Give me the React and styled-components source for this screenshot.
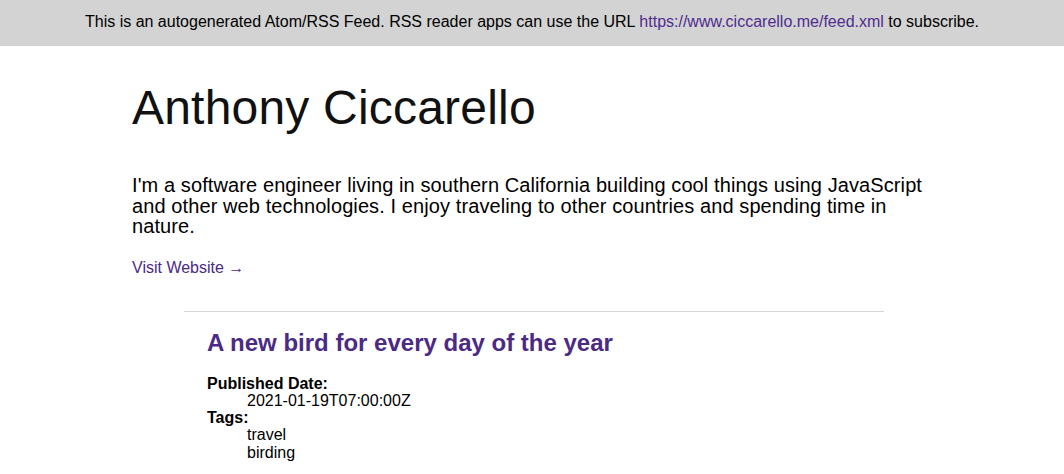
import React from "react";
import styled, { createGlobalStyle } from "styled-components";

const Global = createGlobalStyle`
  html, body { margin: 0; padding: 0; background: #fff; }
  body {
    font-family: "Liberation Sans", Arial, Helvetica, sans-serif;
    color: #000;
  }
`;

const Banner = styled.div`
  background: #d3d3d3;
  height: 46px;
  display: flex;
  align-items: center;
  justify-content: center;
  font-size: 16px;
  line-height: 18px;
  padding-bottom: 2px;
  box-sizing: border-box;
`;

const Link = styled.a`
  color: #4f2c8f;
  text-decoration: none;
`;

const Container = styled.main`
  width: 800px;
  margin: 0 auto;
  padding-top: 34px;
`;

const Title = styled.h1`
  margin: 0;
  font-size: 48px;
  font-weight: 300;
  line-height: 55px;
  letter-spacing: 0.2px;
  color: #111;
`;

const Intro = styled.p`
  margin: 40px 0 0;
  font-size: 20px;
  line-height: 20.7px;
  letter-spacing: 0.1px;
`;

const Visit = styled(Link)`
  display: inline-block;
  margin-top: 22px;
  font-size: 16px;
  line-height: 18.4px;
  color: #4b2a86;
`;

const Entry = styled.article`
  margin: 33px 0 0 52px;
  width: 700px;
  border-top: 1px solid #d6d6d6;
  padding: 17px 23px 0;
  box-sizing: border-box;
`;

const EntryTitle = styled.h2`
  margin: 0;
  font-size: 24px;
  font-weight: 700;
  line-height: 28px;
  color: #4b2a86;
`;

const Meta = styled.dl`
  margin: 18px 0 0;
  font-size: 16px;
  line-height: 17.3px;
`;

const Term = styled.dt`
  font-weight: 700;
`;

const Value = styled.dd`
  margin: 0 0 0 40px;
`;

export default function App() {
  return (
    <>
      <Global />
      <Banner>
        <span>
          This is an autogenerated Atom/RSS Feed. RSS reader apps can use the URL{" "}
          <Link href="#">https://www.ciccarello.me/feed.xml</Link> to subscribe.
        </span>
      </Banner>
      <Container>
        <Title>Anthony Ciccarello</Title>
        <Intro>
          I'm a software engineer living in southern California building cool things using
          JavaScript and other web technologies. I enjoy traveling to other countries and
          spending time in nature.
        </Intro>
        <Visit href="#">Visit Website →</Visit>
        <Entry>
          <EntryTitle>A new bird for every day of the year</EntryTitle>
          <Meta>
            <Term>Published Date:</Term>
            <Value>2021-01-19T07:00:00Z</Value>
            <Term>Tags:</Term>
            <Value>travel</Value>
            <Value>birding</Value>
          </Meta>
        </Entry>
      </Container>
    </>
  );
}
